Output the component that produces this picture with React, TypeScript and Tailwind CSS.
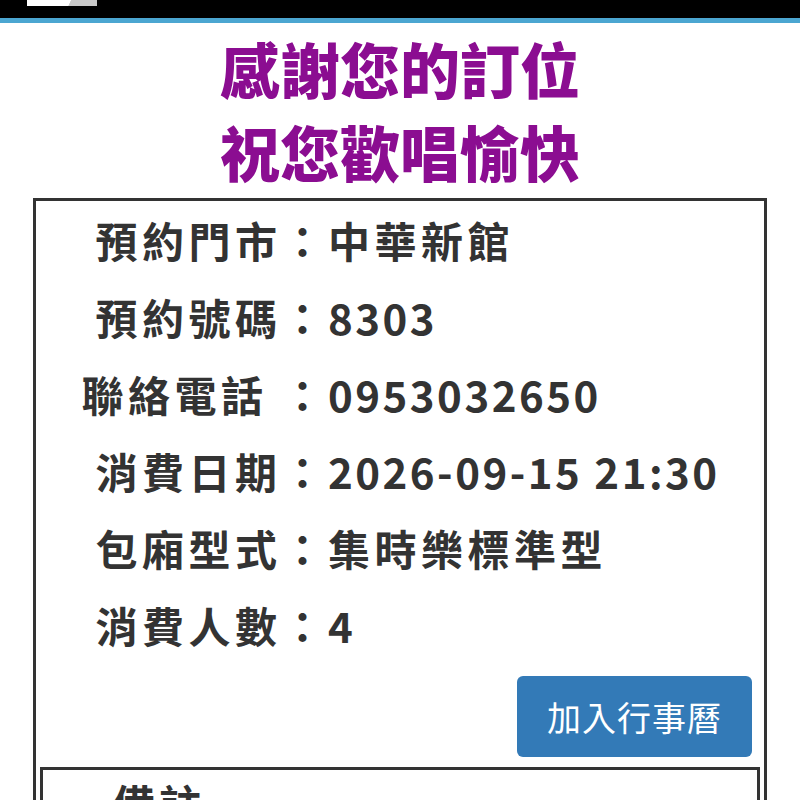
const rows: { label: string; value: string; numeric?: boolean }[] = [
  { label: '預約門市：', value: '中華新館' },
  { label: '預約號碼：', value: '8303', numeric: true },
  { label: '聯絡電話 ：', value: '0953032650', numeric: true },
  { label: '消費日期：', value: '2026-09-15 21:30', numeric: true },
  { label: '包廂型式：', value: '集時樂標準型' },
  { label: '消費人數：', value: '4', numeric: true },
]

export default function App() {
  return (
    <div className="h-[800px] overflow-hidden bg-white font-['Noto_Sans_CJK_TC',sans-serif]">
      {/* top bar */}
      <div className="relative h-[18px] bg-black">
        <div className="absolute left-[27px] top-0 h-[6px] w-[70px] bg-[linear-gradient(115deg,#ffffff_60%,#c8c8c8_61%)]" />
      </div>
      <div className="h-[5px] bg-[#4ba6d1]" />

      {/* title */}
      <div className="pt-[3px] pb-[6px] text-center text-[60px] font-black leading-[83px] text-[#8b0d91]">
        <div>感謝您的訂位</div>
        <div>祝您歡唱愉快</div>
      </div>

      {/* info box */}
      <div className="mx-[33px] border-[3px] border-b-0 border-[#333333]">
        <div className="grid grid-cols-[292px_1fr] text-[42px] font-bold leading-[77px] tracking-[4.5px] text-[#333333]">
          {rows.map((r) => (
            <div key={r.label} className="contents">
              <div className="whitespace-pre text-right">{r.label}</div>
              <div className={r.numeric ? 'tracking-[2.5px]' : ''}>{r.value}</div>
            </div>
          ))}
        </div>

        <div className="mt-[13px] flex justify-end pr-[12px]">
          <button className="h-[81px] rounded-[6px] bg-[#337ab7] px-[30px] text-[34px] tracking-[1px] text-white">
            加入行事曆
          </button>
        </div>

        <div className="mx-[4px] mt-[10px] h-[200px] border-[3px] border-[#333333]">
          <div className="pl-[70px] pt-[8px] text-[42px] font-bold leading-[50px] tracking-[4.5px] text-[#333333]">
            備註
          </div>
        </div>
      </div>
    </div>
  )
}
